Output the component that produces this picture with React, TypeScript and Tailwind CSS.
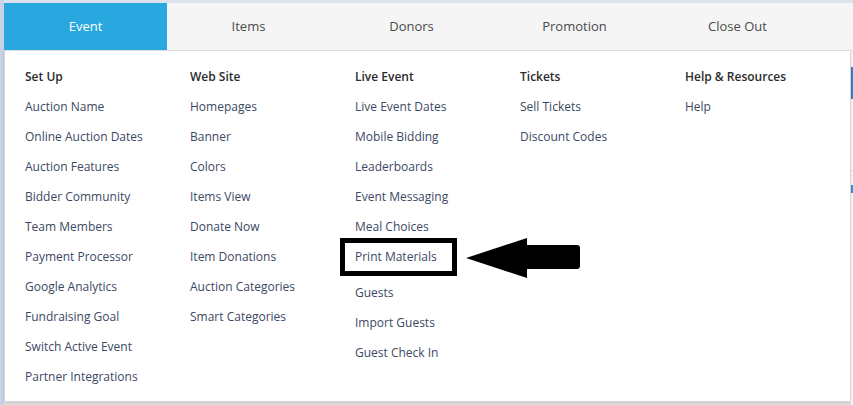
const tabs = ['Event', 'Items', 'Donors', 'Promotion', 'Close Out'];

const columns = [
  {
    title: 'Set Up',
    items: [
      'Auction Name',
      'Online Auction Dates',
      'Auction Features',
      'Bidder Community',
      'Team Members',
      'Payment Processor',
      'Google Analytics',
      'Fundraising Goal',
      'Switch Active Event',
      'Partner Integrations',
    ],
  },
  {
    title: 'Web Site',
    items: [
      'Homepages',
      'Banner',
      'Colors',
      'Items View',
      'Donate Now',
      'Item Donations',
      'Auction Categories',
      'Smart Categories',
    ],
  },
  {
    title: 'Live Event',
    items: [
      'Live Event Dates',
      'Mobile Bidding',
      'Leaderboards',
      'Event Messaging',
      'Meal Choices',
      'Print Materials',
      'Guests',
      'Import Guests',
      'Guest Check In',
    ],
  },
  { title: 'Tickets', items: ['Sell Tickets', 'Discount Codes'] },
  { title: 'Help & Resources', items: ['Help'] },
];

function Arrow() {
  return (
    <svg
      className="absolute left-[111px] top-[-5px]"
      width="116"
      height="42"
      viewBox="0 0 116 42"
    >
      <path
        d="M0 21 L61 1 L61 8 L111 8 Q114 8 114 11 L114 29 Q114 32 111 32 L61 32 L61 41 Z"
        fill="#000"
      />
    </svg>
  );
}

function MenuItem({ label }: { label: string }) {
  if (label === 'Print Materials') {
    // highlighted entry with annotation box + arrow
    return (
      <div className="relative h-[36px]">
        <span className="block leading-[30px]">{label}</span>
        <span className="absolute left-[-15px] top-[-4px] w-[117px] h-[38px] border-[5px] border-black" />
        <Arrow />
      </div>
    );
  }
  return <div className="h-[30px] leading-[30px] whitespace-nowrap">{label}</div>;
}

export default function App() {
  return (
    <div
      className="w-[853px] h-[405px] overflow-hidden flex bg-[#e8e8e8]"
      style={{ fontFamily: '"Open Sans", "Noto Sans", sans-serif' }}
    >
      <div className="w-[4px] shrink-0 bg-[#c9d3e6]" />
      <div className="flex-1 flex flex-col">
        <div className="h-[3px] bg-[#dde3ee]" />
        <div className="h-[48px] flex bg-[#f5f5f5] border-b border-[#dedede]">
          {tabs.map((tab, i) => (
            <div
              key={tab}
              className={
                i === 0
                  ? 'w-[163px] flex items-center justify-center text-[13px] text-white bg-[#29a8e0]'
                  : 'w-[163px] flex items-center justify-center text-[13px] text-[#4a4a4a]'
              }
            >
              {tab}
            </div>
          ))}
        </div>
        <div className="flex flex-1">
          <div className="w-[847px] h-[351px] bg-white border-l border-r border-b border-[#d4d4d4] shadow-[0_2px_3px_rgba(0,0,0,0.12)] pt-[11px] pl-[20px] flex text-[12px]">
            {columns.map((col) => (
              <div key={col.title} className="w-[165px] shrink-0">
                <div className="h-[30px] leading-[30px] font-semibold text-[#2b2b2b]">{col.title}</div>
                <div className="text-[#3b4963]">
                  {col.items.map((item) => (
                    <MenuItem key={item} label={item} />
                  ))}
                </div>
              </div>
            ))}
          </div>
          <div className="flex-1 flex flex-col bg-[#f3f3f3]">
            <div className="h-[16px]" />
            <div className="h-[32px] bg-[#2f7fc1]" />
            <div className="h-[72px] border-b border-[#ddd]" />
            <div className="h-[8px] mt-[14px] bg-[#3a8fd4]" />
          </div>
        </div>
      </div>
    </div>
  );
}
